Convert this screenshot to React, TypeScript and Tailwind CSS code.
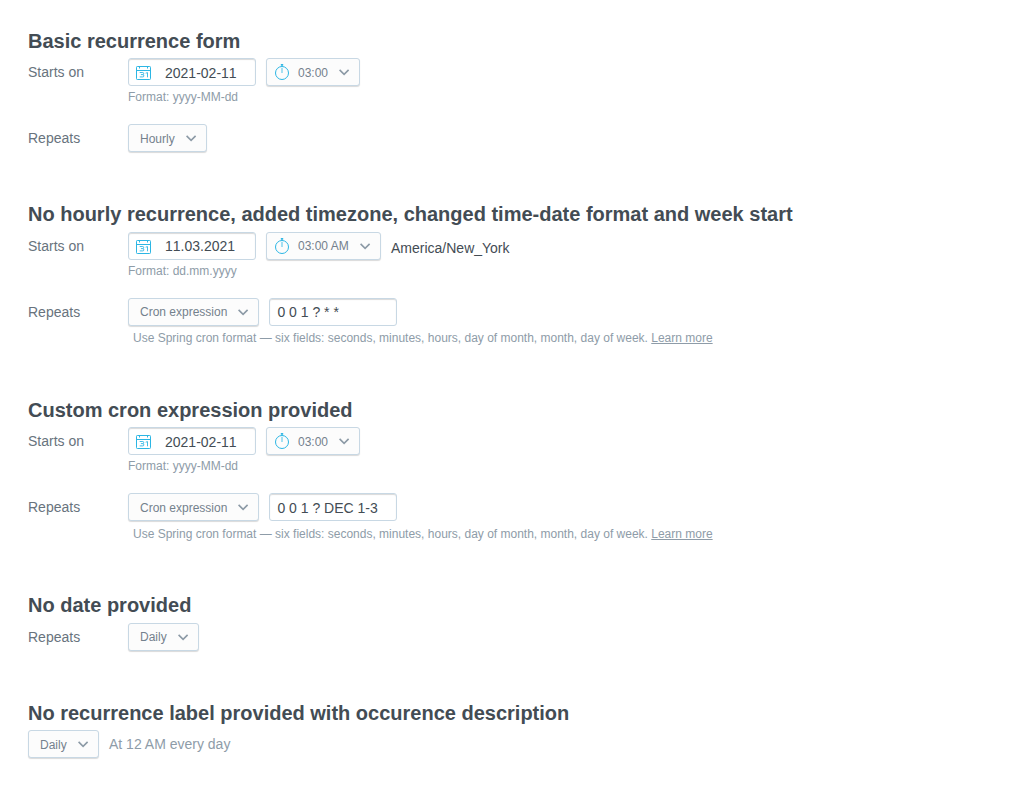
import React from "react";

function Calendar() {
  return (
    <svg width="15" height="14" viewBox="0 0 15 14" fill="none" stroke="#2cb6e4" className="relative top-px shrink-0">
      <rect x=".5" y=".5" width="14" height="13" rx=".8" />
      <path d="M.5 4.5h14M3.5 0v2.5M11.5 0v2.5" />
      <path d="M3.7 6.5h3.1q.9 0 .9 1t-.9 1.1q1 0 1 1.2t-1 1.1H3.7M4.9 8.6h2M9.7 7.2l1.8-.6V11.3" strokeWidth=".9" />
    </svg>
  );
}

function Timer() {
  return (
    <svg width="14" height="16" viewBox="0 0 14 16" fill="none" stroke="#2cb6e4" className="shrink-0">
      <circle cx="7" cy="9" r="6.5" />
      <path d="M7 .5v2" />
      <path d="M7 4v5" strokeWidth="1.2" strokeOpacity=".7" />
      <path d="M5.8 .8h2.4" strokeWidth="1.5" />
    </svg>
  );
}

function Chevron() {
  return (
    <svg width="11" height="7" viewBox="0 0 11 7" fill="none" stroke="#8c9aa6" strokeWidth="1.6" className="shrink-0">
      <path d="M.6 .9 5.1 5.4 9.6 .9" />
    </svg>
  );
}

function Title({ children, raised }: { children: React.ReactNode; raised?: boolean }) {
  return <h3 className={`h-[30px] text-[20px] font-bold text-[#434c54] ${raised ? "leading-[25px]" : "leading-[27px]"}`}>{children}</h3>;
}

function Select({ children, width, timer, low }: { children: React.ReactNode; width: string; timer?: boolean; low?: boolean }) {
  return (
    <button
      className={`flex h-[28px] items-center justify-between rounded-[3px] border border-[#c8d8e4] bg-[#fcfcfc] pr-[9px] text-[12px] text-[#74818d] shadow-[0_1px_1px_rgba(0,0,0,0.15)] ${timer ? "pl-2" : "pl-[11px]"} ${width}`}
    >
      <span className="flex items-center gap-[9px]">
        {timer && <Timer />}
        <span className={low ? "pt-[2px] leading-[26px]" : "leading-[26px]"}>{children}</span>
      </span>
      <Chevron />
    </button>
  );
}

function Field({ children, icon, low }: { children: React.ReactNode; icon?: boolean; low?: boolean }) {
  return (
    <div className="flex h-[28px] w-[128px] items-center gap-[14px] rounded-[3px] border border-[#c8d8e4] bg-white pl-[7px] text-[14px] text-[#434c54] shadow-[inset_0_1px_1px_rgba(0,0,0,0.15)]">
      {icon && <Calendar />}
      <span className={`whitespace-pre leading-[26px] ${icon ? "[font-kerning:none]" : "pl-[0.4px]"} ${low ? "pt-[2px]" : ""}`}>{children}</span>
    </div>
  );
}

function Row({ label, children }: { label: string; children: React.ReactNode }) {
  return (
    <div className="flex h-[28px]">
      <div className="w-[100px] text-[14px] leading-[28px] text-[#68737d]">{label}</div>
      <div className="flex gap-[10px]">{children}</div>
    </div>
  );
}

function StartsOn({ date, time, width, format, zone, low }: { date: string; time: string; width: string; format: string; zone?: string; low?: boolean }) {
  return (
    <div className="h-[66px]">
      <Row label="Starts on">
        <Field icon low={low}>{date}</Field>
        <Select width={width} timer low={low}>{time}</Select>
        {zone && <span className="text-[14px] leading-[32px] text-[#434c54]">{zone}</span>}
      </Row>
      <div className="ml-[100px] text-[12px] leading-[22px] text-[#8e9ca8]">Format: {format}</div>
    </div>
  );
}

function Cron({ value, low }: { value: string; low?: boolean }) {
  return (
    <>
      <Row label="Repeats">
        <Select width="w-[131px]" low={low}>Cron expression</Select>
        <Field low={low}>{value}</Field>
      </Row>
      <div className={`ml-[105px] text-[12px] text-[#8e9ca8] ${low ? "leading-[26px]" : "leading-[24px]"}`}>
        Use Spring cron format — six fields: seconds, minutes, hours, day of month, month, day of week.{" "}
        <a className="underline" href="#learn">Learn more</a>
      </div>
    </>
  );
}

export default function App() {
  return (
    <main className="h-[798px] overflow-hidden bg-white px-7 pt-7 font-['Liberation_Sans',sans-serif]">
      <section className="h-[174px]">
        <Title>Basic recurrence form</Title>
        <StartsOn date="2021-02-11" time="03:00" width="w-[94px]" format="yyyy-MM-dd" low />
        <Row label="Repeats"><Select width="w-[79px]" low>Hourly</Select></Row>
      </section>
      <section className="h-[195px]">
        <Title raised>No hourly recurrence, added timezone, changed time-date format and week start</Title>
        <StartsOn date="11.03.2021" time="03:00 AM" width="w-[115px]" format="dd.mm.yyyy" zone="America/New_York" />
        <Cron value="0 0 1 ? * *" />
      </section>
      <section className="h-[196px]">
        <Title>Custom cron expression provided</Title>
        <StartsOn date="2021-02-11" time="03:00" width="w-[94px]" format="yyyy-MM-dd" low />
        <Cron value="0 0 1 ? DEC 1-3" low />
      </section>
      <section className="h-[107px]">
        <Title raised>No date provided</Title>
        <Row label="Repeats"><Select width="w-[71px]">Daily</Select></Row>
      </section>
      <section>
        <Title>No recurrence label provided with occurence description</Title>
        <div className="flex gap-[10px]">
          <Select width="w-[71px]" low>Daily</Select>
          <span className="text-[14px] leading-[28px] text-[#8e9ca8]">At 12 AM every day</span>
        </div>
      </section>
    </main>
  );
}
